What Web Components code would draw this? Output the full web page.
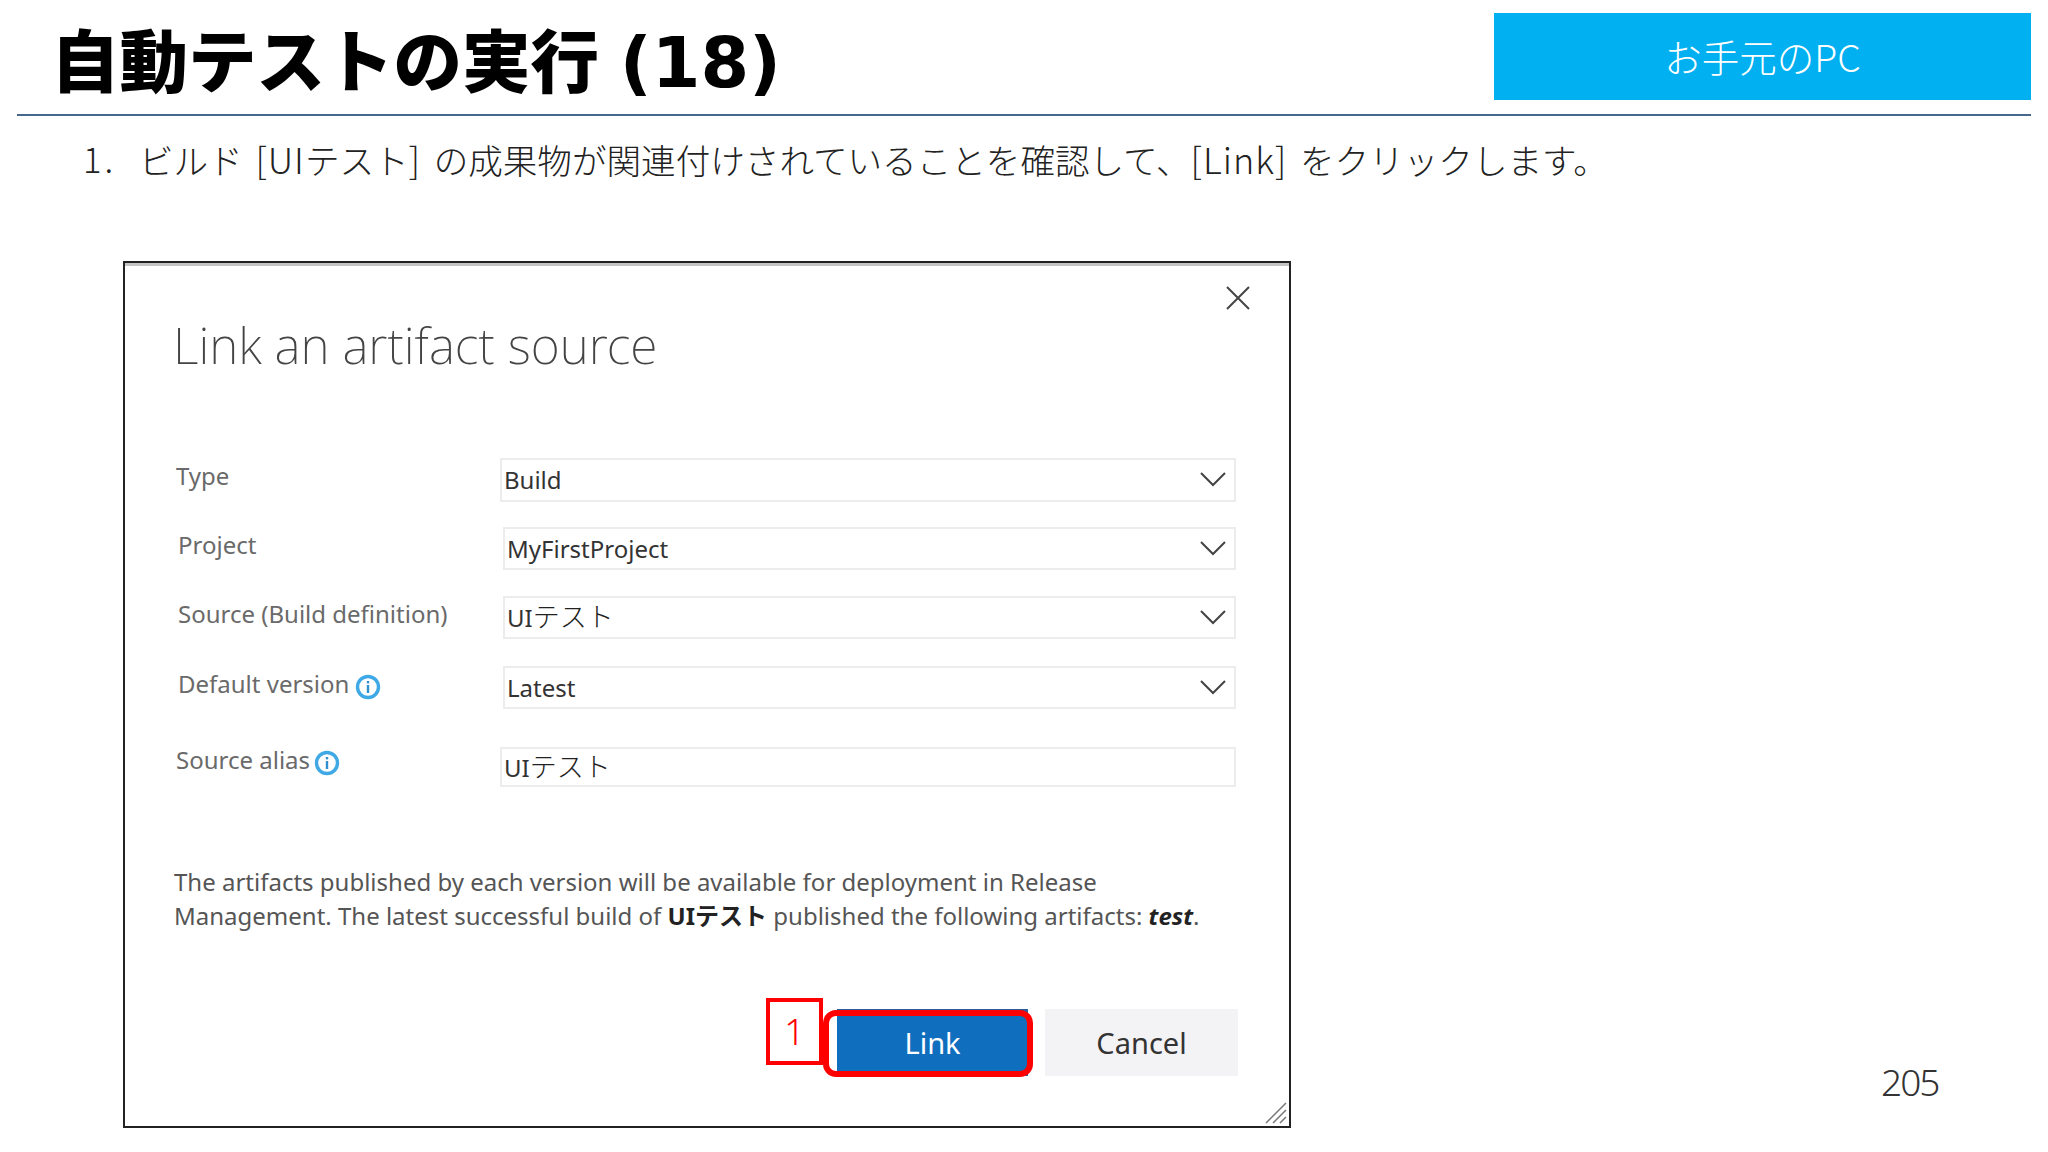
<!DOCTYPE html>
<html lang="ja"><head><meta charset="utf-8"><title>自動テストの実行</title>
<style>
html,body{margin:0;padding:0;background:#fff;width:2048px;height:1152px;overflow:hidden}
body{font-family:"Noto Sans","Noto Sans CJK JP",sans-serif;color:#333}
</style></head><body>
<slide-page>
  <slide-header slot="header" tag="お手元のPC">自動テストの実行 <span>(18)</span></slide-header>
  <step-line slot="step" num="1.">ビルド <span>[UI</span>テスト<span>]</span> の成果物が関連付けされていることを確認して、<span>[Link]</span> をクリックします。</step-line>
  <link-dialog slot="dialog" heading="Link an artifact source">
    <form-row label="Type" value="Build" select style="--top:0px;--lx:1px;--fx:0px;--h:44px"></form-row>
    <form-row label="Project" value="MyFirstProject" select style="--top:25px;--lx:3px;--fx:3px"></form-row>
    <form-row label="Source (Build definition)" value="UIテスト" select style="--top:26px;--lx:3px;--fx:3px"></form-row>
    <form-row label="Default version" value="Latest" select info style="--top:27px;--lx:3px;--fx:3px;--ig:6px"></form-row>
    <form-row label="Source alias" value="UIテスト" info style="--top:38px;--lx:1px;--fx:0px;--h:40px;--lb:15px;--ig:4px"></form-row>
    <dialog-note slot="note">The artifacts published by each version will be available for deployment in Release<br>Management. The latest successful build of <b>UIテスト</b> published the following artifacts: <b><i>test</i></b>.</dialog-note>
    <dialog-actions slot="actions"></dialog-actions>
  </link-dialog>
  <page-number slot="num">205</page-number>
</slide-page>
<script>
const def=(name,css,html,init)=>customElements.define(name,class extends HTMLElement{
  connectedCallback(){ if(this.shadowRoot) return;
    const r=this.attachShadow({mode:'open'});
    r.innerHTML='<style>'+css+'</style>'+html(this);
    init&&init(r,this);}
});
const JP='"Noto Sans CJK JP","Noto Sans",sans-serif';
const UI='"Noto Sans","Noto Sans CJK JP",sans-serif';
def('slide-page',`:host{display:block;width:2048px;height:1152px}
 .main{display:flex;margin:0 0 0 123px;align-items:flex-end}`,
 ()=>`<slot name="header"></slot><slot name="step"></slot><div class="main"><slot name="dialog"></slot><slot name="num"></slot></div>`);
def('slide-header',`:host{display:flex;justify-content:space-between;align-items:flex-start;margin:0 17px 0 17px;height:114px;border-bottom:2px solid #46688f}
 h1{margin:0;padding:18px 0 0 34px;font:900 68.5px/80px ${JP};color:#000;white-space:nowrap}
 ::slotted(span){font:700 70px/80px "DejaVu Sans",sans-serif;margin-left:5px}
 .tag{margin-top:13px;width:537px;height:87px;background:#00b0f0;color:#fff;display:flex;align-items:center;justify-content:center;padding-bottom:2px;box-sizing:border-box;font:300 37.5px/1 ${JP}}`,
 h=>`<h1><slot></slot></h1><div class="tag">${h.getAttribute('tag')}</div>`);
def('step-line',`:host{display:flex;height:145px;padding:18px 0 0 83px;box-sizing:border-box;font:300 34.6px/48px ${JP};color:#222;white-space:nowrap;word-spacing:5px}
 ::slotted(span){font-size:36px;letter-spacing:1px}
 .n{width:56px;letter-spacing:3px}`,h=>`<span class="n">${h.getAttribute('num')}</span><span><slot></slot></span>`);
def('link-dialog',`:host{display:block;position:relative;width:1168px;height:867px;box-sizing:border-box;border:2px solid #222;border-top:2px solid #222;box-shadow:inset 0 3px 0 #c4c4c4;background:#fff;font-family:${UI}}
 h2{margin:0;padding:46px 0 0 48px;height:195px;box-sizing:border-box;font:200 49.8px/72px ${UI};color:#444}
 .x{position:absolute;left:1100px;top:22px}
 .grip{position:absolute;right:2px;bottom:2px}`,
 h=>`<h2>${h.getAttribute('heading')}</h2>
 <svg class="x" width="26" height="26" viewBox="0 0 26 26" fill="none" stroke="#444" stroke-width="2"><path d="M2 2 24 24M24 2 2 24"/></svg>
 <slot></slot><slot name="note"></slot><slot name="actions"></slot>
 <svg class="grip" width="22" height="22" viewBox="0 0 22 22" stroke="#777" stroke-width="1.5"><path d="M1 21 21 1M8 21 21 8M15 21 21 15"/></svg>`);
def('form-row',`:host{display:flex;align-items:center;margin-top:var(--top,0);height:var(--h,43px)}
 .l{width:calc(325px - var(--lx));margin-left:calc(50px + var(--lx));margin-bottom:var(--lb,8px);display:flex;align-items:center;font:400 24px/34px ${UI};color:#6a6a6a;white-space:nowrap;box-sizing:border-box}
 .i{margin:6px 0 0 var(--ig,8px);flex:none}
 .f{margin-left:var(--fx);width:calc(736px - var(--fx));height:100%;box-sizing:border-box;border:2px solid #ececec;display:flex;align-items:center;justify-content:space-between;padding:0 8px 0 2px;font:400 24px/34px ${UI};color:#333}
 .k{font-size:27px;font-weight:300;color:#222}
 svg.c{margin:0 0 2px 0}`,
 h=>`<div class="l">${h.getAttribute('label')}${h.hasAttribute('info')?`<svg class="i" width="26" height="26" viewBox="0 0 26 26"><circle cx="13" cy="13" r="10.5" fill="#fff" stroke="#3fa9e5" stroke-width="3.4"/><rect x="11.8" y="11" width="2.4" height="8" fill="#2f8fd0"/><rect x="11.8" y="7" width="2.4" height="2.4" fill="#2f8fd0"/></svg>`:''}</div>
 <div class="f"><span>${h.getAttribute('value').replace('テスト','<span class="k">テスト</span>')}</span>${h.hasAttribute('select')?`<svg class="c" width="26" height="16" viewBox="0 0 26 16" fill="none" stroke="#444" stroke-width="2"><path d="M1 2 13 14 25 2"/></svg>`:''}</div>`);
def('dialog-note',`:host{display:block;margin:78px 0 0 49px;font:400 24px/34px ${UI};color:#555;white-space:nowrap}
 ::slotted(b){color:#222}`,()=>`<slot></slot>`);
def('dialog-actions',`:host{display:flex;justify-content:flex-end;gap:17px;margin:76px 51px 0 0;position:relative}
 button{width:191px;height:67px;border:0;padding:0;font:400 29px/1 ${UI}}
 .ok{background:#106ebe;color:#fff;border-top:3px solid #2b5c9e;padding-bottom:3px}
 .no{background:#f3f2f5;color:#333;width:193px}
 .hl{position:absolute;right:205px;top:1px;width:210px;height:67px;box-sizing:border-box;border:6px solid #f00;border-radius:13px;pointer-events:none}
 .n{position:absolute;right:415px;top:-11px;width:57px;height:67px;box-sizing:border-box;border:4px solid #f00;background:#fff;color:#f00;display:flex;align-items:center;justify-content:center;font:300 36px/1 ${UI}}`,
 ()=>`<button class="ok">Link</button><button class="no">Cancel</button><div class="hl"></div><div class="n">1</div>`);
def('page-number',`:host{display:block;margin:0 0 28px 590px;font:300 37px/1 ${UI};letter-spacing:-2px;color:#333}`,()=>`<slot></slot>`);
</script>
</body></html>
